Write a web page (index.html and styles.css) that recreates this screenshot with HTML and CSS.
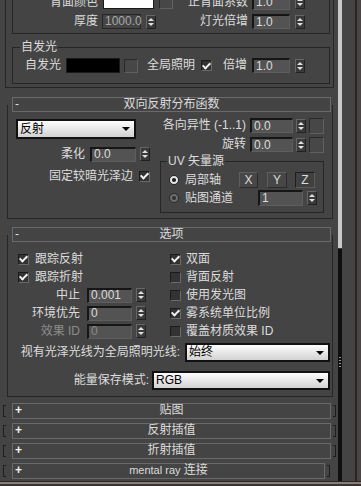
FILE: index.html
```html
<!DOCTYPE html>
<html lang="zh-CN">
<head>
    <meta charset="UTF-8">
    <title>材质参数</title>
    <link rel="stylesheet" href="styles.css">
</head>
<body>
    <div class="window">
        <div class="main">
            <!-- 基本参数 (上部已滚出) -->
            <div class="rollout-top">
                <div class="group group-top">
                    <div class="row row-a">
                        <span class="lbl w85">背面颜色</span>
                        <span class="swatch swatch-white ml5"></span>
                        <span class="mapbtn ml5"></span>
                        <span class="lbl w75">正背面系数</span>
                        <span class="field ml4">1.0</span>
                        <span class="spin ml5"></span>
                    </div>
                    <div class="row row-b">
                        <span class="lbl w85">厚度</span>
                        <span class="field field-off ml4 w39">1000.0</span>
                        <span class="spin ml5"></span>
                        <span class="lbl w92">灯光倍增</span>
                        <span class="field ml4">1.0</span>
                        <span class="spin ml5"></span>
                    </div>
                </div>
                <div class="group group-glow">
                    <span class="legend">自发光</span>
                    <div class="row">
                        <span class="lbl w48">自发光</span>
                        <span class="swatch swatch-black ml5"></span>
                        <span class="mapbtn ml4"></span>
                        <span class="txt ml9 w48">全局照明</span>
                        <span class="cb on ml6"></span>
                        <span class="lbl w35">倍增</span>
                        <span class="field ml5">1.0</span>
                        <span class="spin ml5"></span>
                    </div>
                </div>
            </div>

            <!-- 双向反射分布函数 -->
            <div class="rollout">
                <div class="rollout-head"><span class="sign">-</span><span class="title">双向反射分布函数</span></div>
                <div class="rollout-body brdf">
                    <div class="brdf-left">
                        <div class="combo combo-reflect">反射</div>
                        <div class="row soften-row">
                            <span class="lbl w77">柔化</span>
                            <span class="field ml5 w46">0.0</span>
                            <span class="spin ml4"></span>
                        </div>
                        <div class="row edge-row">
                            <span class="lbl w125">固定较暗光泽边</span>
                            <span class="cb on ml6"></span>
                        </div>
                    </div>
                    <div class="brdf-right">
                        <div class="row aniso-row">
                            <span class="lbl w88">各向异性 (-1..1)</span>
                            <span class="field ml4 w43">0.0</span>
                            <span class="spin ml3"></span>
                            <span class="mapbtn map-tall ml3"></span>
                        </div>
                        <div class="row rotate-row">
                            <span class="lbl w88">旋转</span>
                            <span class="field ml4 w43">0.0</span>
                            <span class="spin ml3"></span>
                            <span class="mapbtn map-tall ml3"></span>
                        </div>
                        <div class="group uv-group">
                            <span class="legend">UV 矢量源</span>
                            <div class="row uv-row">
                                <span class="radio on ml8"></span>
                                <span class="txt ml6 w54">局部轴</span>
                                <span class="btn">X</span>
                                <span class="btn ml9 w20">Y</span>
                                <span class="btn down ml8 w20">Z</span>
                            </div>
                            <div class="row uv-row2">
                                <span class="radio ml8"></span>
                                <span class="txt ml6 w73">贴图通道</span>
                                <span class="field w45">1</span>
                                <span class="spin ml4"></span>
                            </div>
                        </div>
                    </div>
                </div>
            </div>

            <!-- 选项 -->
            <div class="rollout options">
                <div class="rollout-head"><span class="sign">-</span><span class="title">选项</span></div>
                <div class="rollout-body opts-body">
                    <div class="opts">
                        <div class="opts-left">
                            <div class="row"><span class="cb on ml10"></span><span class="txt ml6">跟踪反射</span></div>
                            <div class="row"><span class="cb on ml10"></span><span class="txt ml6">跟踪折射</span></div>
                            <div class="row"><span class="lbl w72">中止</span><span class="field ml7 w45">0.001</span><span class="spin ml4"></span></div>
                            <div class="row"><span class="lbl w72">环境优先</span><span class="field ml7 w45">0</span><span class="spin ml4"></span></div>
                            <div class="row"><span class="lbl w72 dim">效果 ID</span><span class="field ml7 w45 dim">0</span><span class="spin ml4"></span></div>
                        </div>
                        <div class="opts-right">
                            <div class="row"><span class="cb on"></span><span class="txt ml5">双面</span></div>
                            <div class="row"><span class="cb"></span><span class="txt ml5">背面反射</span></div>
                            <div class="row"><span class="cb"></span><span class="txt ml5">使用发光图</span></div>
                            <div class="row"><span class="cb on"></span><span class="txt ml5">雾系统单位比例</span></div>
                            <div class="row"><span class="cb"></span><span class="txt ml5">覆盖材质效果 ID</span></div>
                        </div>
                    </div>
                    <div class="row gloss-row">
                        <span class="lbl w172">视有光泽光线为全局照明光线:</span>
                        <span class="combo ml5 w145">始终</span>
                    </div>
                    <div class="row energy-row">
                        <span class="lbl w141">能量保存模式:</span>
                        <span class="combo ml3 w178">RGB</span>
                    </div>
                </div>
            </div>

            <!-- 折叠的卷展栏 -->
            <div class="collapsed first">
                <span class="bracket bracket-l"></span>
                <div class="rollout-head"><span class="sign plus">+</span><span class="title">贴图</span></div>
                <span class="bracket bracket-r"></span>
            </div>
            <div class="collapsed">
                <span class="bracket bracket-l"></span>
                <div class="rollout-head"><span class="sign plus">+</span><span class="title">反射插值</span></div>
                <span class="bracket bracket-r"></span>
            </div>
            <div class="collapsed">
                <span class="bracket bracket-l"></span>
                <div class="rollout-head"><span class="sign plus">+</span><span class="title">折射插值</span></div>
                <span class="bracket bracket-r"></span>
            </div>
            <div class="collapsed">
                <span class="bracket bracket-l"></span>
                <div class="rollout-head short"><span class="sign plus">+</span><span class="title"><span class="latin">mental ray</span> 连接</span></div>
                <span class="bracket bracket-r"></span>
            </div>
        </div>

        <div class="scroll">
            <div class="scroll-track"></div>
            <div class="scroll-thumb"><div class="grip"></div></div>
        </div>
        <div class="gutter"></div>
        <div class="edge"></div>
        <div class="outside"></div>
    </div>
    <div class="bottom"></div>
</body>
</html>
```

FILE: styles.css
```css
* {
    box-sizing: border-box;
}

body {
    margin: 0;
    width: 361px;
    height: 486px;
    overflow: hidden;
    background: #444;
    color: #dcdcdc;
    font-family: "Liberation Sans", "Noto Sans CJK SC", sans-serif;
    font-size: 12px;
    line-height: 13px;
}

.window {
    display: flex;
    height: 481px;
    overflow: hidden;
}

.main {
    width: 338px;
    flex: none;
}

/* scroll bar and window frame */
.scroll {
    width: 4px;
    flex: none;
    display: flex;
    flex-direction: column;
}

.scroll-track {
    height: 248px;
    background: #c9c9c9;
}

.scroll-thumb {
    flex: 1;
    background: #0f0f0f;
    border-top: 1px solid #3a3a3a;
    padding-top: 108px;
}

.grip {
    width: 2px;
    height: 11px;
    margin: 0 auto;
    background: repeating-linear-gradient(#9a9a9a 0 1px, transparent 1px 3px);
}

.gutter {
    width: 13px;
    flex: none;
}

.edge {
    width: 2px;
    flex: none;
    background: #2a2323;
}

.outside {
    flex: 1;
    background: #4a4545;
}

.bottom {
    height: 5px;
    border-top: 1px solid #2a2424;
    background: linear-gradient(#8a7e78 0 2px, #3b3331 2px);
}

/* rollouts */
.rollout-top {
    display: flow-root;
    margin-left: 5px;
    width: 329px;
    border: 1px solid #262626;
    border-top: none;
    padding: 0 0 3px 6px;
}

.rollout {
    margin: 9px 0 0 7px;
    width: 326px;
}

.rollout.options {
    margin-top: 8px;
}

.rollout-head {
    display: grid;
    grid-template-columns: 16px 1fr 16px;
    width: 319px;
    height: 15px;
    margin-left: 5px;
    border: 1px solid #6a6a6a;
    background: #444;
}

.rollout-head .sign {
    padding-left: 2px;
}

.rollout-head .plus {
    font-weight: bold;
    color: #f2f2f2;
}

.rollout-head .title {
    text-align: center;
    white-space: nowrap;
}

.latin {
    font-size: 11px;
}

.rollout-body {
    display: flow-root;
    margin-top: -7px;
    border: 1px solid #262626;
    border-top: none;
}

.collapsed {
    display: flex;
    align-items: center;
    height: 16px;
    margin-top: 4px;
}

.collapsed.first {
    margin-top: 6px;
}

.collapsed .rollout-head {
    height: 16px;
    margin-left: 6px;
}

.collapsed .rollout-head.short {
    width: 313px;
}

.bracket {
    width: 3px;
    height: 12px;
    border: 1px solid #1e1e1e;
}

.bracket-l {
    margin-left: 3px;
    border-right: none;
}

.bracket-r {
    margin-left: 2px;
    border-left: none;
}

/* group boxes */
.group {
    display: flow-root;
    width: 318px;
    border: 1px solid #262626;
}

.group-top {
    border-top: none;
    padding-bottom: 4px;
}

.group-glow {
    margin-top: 13px;
    padding-bottom: 10px;
}

.group-glow .row {
    margin-top: 5px;
}

.legend {
    display: block;
    width: max-content;
    height: 12px;
    margin: -7px 0 0 7px;
    padding: 0 1px;
    line-height: 12px;
    background: #444;
}

.uv-group {
    width: 164px;
    margin: 9px 0 0 2px;
    padding-bottom: 6px;
}

.uv-group .legend {
    margin-left: 6px;
}

/* rows */
.row {
    display: flex;
    align-items: center;
    height: 15px;
}

.row-a {
    height: 14px;
    margin-top: -5px;
}

.row-b {
    margin-top: 5px;
}

.lbl {
    flex: none;
    text-align: right;
    white-space: nowrap;
}

.txt {
    flex: none;
    white-space: nowrap;
}

.dim {
    color: #8c8c8c;
}

/* controls */
.field {
    display: flex;
    align-items: center;
    flex: none;
    width: 38px;
    height: 15px;
    padding-left: 2px;
    background: #535353;
    border-style: solid;
    border-width: 2px 1px 1px 2px;
    border-color: #161616 #5e5e5e #5e5e5e #161616;
    white-space: nowrap;
}

.field-off {
    background: #454545;
    border: 1px solid #262626;
    color: #a8a8a8;
}

.spin {
    display: flex;
    flex: none;
    flex-direction: column;
    align-items: center;
    justify-content: center;
    gap: 2px;
    width: 10px;
    height: 14px;
    background: #3a3a3a;
    border: 1px solid;
    border-color: #666 #222 #222 #666;
}

.spin::before,
.spin::after {
    content: "";
    width: 0;
    border-left: 3px solid transparent;
    border-right: 3px solid transparent;
}

.spin::before {
    border-bottom: 3px solid #e0e0e0;
}

.spin::after {
    border-top: 3px solid #e0e0e0;
}

.swatch {
    flex: none;
    border: 1px solid #1a1a1a;
}

.swatch-white {
    width: 51px;
    height: 14px;
    background: #fff;
}

.swatch-black {
    width: 54px;
    height: 15px;
    background: #000;
}

.mapbtn {
    flex: none;
    width: 14px;
    height: 14px;
    background: #474747;
    border: 1px solid;
    border-color: #2a2a2a #606060 #606060 #2a2a2a;
}

.mapbtn.map-tall {
    width: 15px;
    height: 16px;
}

.cb {
    display: flex;
    flex: none;
    align-items: center;
    justify-content: center;
    width: 11px;
    height: 11px;
    background: #333;
    border: 1px solid;
    border-color: #1c1c1c #6a6a6a #6a6a6a #1c1c1c;
}

.cb.on::after {
    content: "";
    width: 3px;
    height: 6px;
    margin-top: -2px;
    border: solid #f2f2f2;
    border-width: 0 2px 2px 0;
    transform: rotate(45deg);
}

.radio {
    flex: none;
    width: 10px;
    height: 10px;
    border-radius: 50%;
    border: 1px solid #2a2a2a;
    background: radial-gradient(circle, #333 0 1.5px, #6e6e6e 2.5px);
}

.radio.on {
    background: radial-gradient(circle, #222 0 1.5px, #e8e8e8 2.5px);
}

.btn {
    display: flex;
    flex: none;
    align-items: center;
    justify-content: center;
    width: 19px;
    height: 16px;
    background: #474747;
    border: 1px solid;
    border-color: #5e5e5e #2a2a2a #2a2a2a #5e5e5e;
}

.btn.down {
    background: #404040;
    border-color: #1e1e1e #5a5a5a #5a5a5a #1e1e1e;
}

.combo {
    display: flex;
    flex: none;
    align-items: center;
    height: 19px;
    padding-left: 2px;
    background: linear-gradient(#fdfdfd, #d2d2d2);
    border: 2px solid #111;
    color: #000;
}

.combo::after {
    content: "";
    margin: 0 4px 0 auto;
    border-left: 4px solid transparent;
    border-right: 4px solid transparent;
    border-top: 4px solid #000;
}

/* 双向反射分布函数 layout */
.brdf {
    display: flex;
    align-items: flex-start;
}

.brdf-left {
    width: 150px;
}

.brdf-right {
    flex: 1;
    margin-bottom: 5px;
}

.combo-reflect {
    width: 120px;
    height: 20px;
    margin: 14px 0 0 8px;
}

.soften-row {
    height: 16px;
    margin-top: 7px;
}

.edge-row {
    height: 12px;
    margin-top: 8px;
}

.aniso-row {
    margin-top: 13px;
}

.rotate-row {
    margin-top: 4px;
}

.uv-row {
    height: 16px;
    margin-top: 5px;
}

.uv-row2 {
    height: 16px;
    margin-top: 2px;
}

.uv-row2 .field {
    height: 16px;
}

/* 选项 layout */
.opts-body {
    padding-bottom: 6px;
}

.opts {
    display: flex;
    padding-top: 15px;
}

.opts-left {
    width: 162px;
}

.opts-right {
    flex: 1;
}

.opts .row {
    height: 18px;
}

.gloss-row {
    height: 19px;
    margin-top: 3px;
}

.energy-row {
    height: 19px;
    margin-top: 9px;
}

/* spacing and widths */
.ml3 { margin-left: 3px; }
.ml4 { margin-left: 4px; }
.ml5 { margin-left: 5px; }
.ml6 { margin-left: 6px; }
.ml7 { margin-left: 7px; }
.ml8 { margin-left: 8px; }
.ml9 { margin-left: 9px; }
.ml10 { margin-left: 10px; }

.w20 { width: 20px; }
.w35 { width: 35px; }
.w39 { width: 39px; }
.w43 { width: 43px; }
.w45 { width: 45px; }
.w46 { width: 46px; }
.w48 { width: 48px; }
.w54 { width: 54px; }
.w72 { width: 72px; }
.w73 { width: 73px; }
.w75 { width: 75px; }
.w77 { width: 77px; }
.w85 { width: 85px; }
.w88 { width: 88px; }
.w92 { width: 92px; }
.w125 { width: 125px; }
.w141 { width: 141px; }
.w145 { width: 145px; }
.w172 { width: 172px; }
.w178 { width: 178px; }
```
